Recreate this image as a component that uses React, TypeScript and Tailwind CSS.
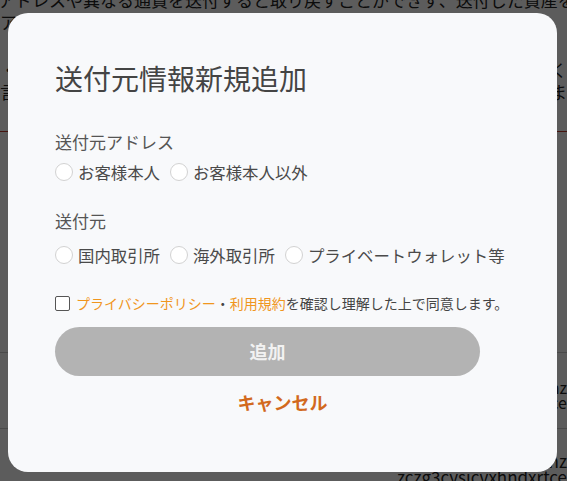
import React from "react";

const jp = { fontFamily: '"Noto Sans CJK JP", "Noto Sans", sans-serif' };

// Round radio with label text
const Radio = ({ label }: { label: string }) => (
  <label className="flex items-center gap-[5px]">
    <span className="w-[18px] h-[18px] rounded-full border border-[#d2d2d2] bg-white shrink-0" />
    <span className="text-[16.4px] leading-[24px] text-[#4a4a4a]">{label}</span>
  </label>
);

export default function App() {
  return (
    <div
      className="relative w-[567px] h-[481px] overflow-hidden bg-white text-[#222]"
      style={jp}
    >
      {/* Page underneath the dialog */}
      <div className="-mt-[11px]">
        <p className="text-[17px] leading-[22px] whitespace-nowrap -ml-[2px]">
          アドレスや異なる通貨を送付すると取り戻すことができず、送付した資産を失う可能性があります。
        </p>
        <p className="text-[17px] leading-[22px]">アドレスをご確認ください。</p>
        <div className="mt-[26px] flex justify-between text-[17px] leading-[22px]">
          <span>・</span>
          <span>く</span>
        </div>
        <div className="flex justify-between text-[17px] leading-[22px]">
          <span>言</span>
          <span>ま</span>
        </div>
        <div className="mt-[9px] h-[20px] border-b border-[#c0392b]" />
        <div className="h-[220px]" />
        <div className="border-t border-[#ccc] h-[76px] flex flex-col items-end justify-center text-[16px] leading-[15px] pt-[8px]">
          <span>hnz</span>
          <span>rce</span>
        </div>
        <div className="border-t border-[#ccc] flex flex-col items-end text-[17px] leading-[16px] pt-[24px]">
          <span>hnz</span>
          <span>zczg3cysicvxhndxrtce</span>
        </div>
      </div>

      {/* Backdrop */}
      <div className="absolute inset-0 bg-black/[0.64]" />

      {/* Dialog */}
      <div className="absolute left-[8px] top-[13px] w-[549px] h-[459px] rounded-[20px] bg-[#f8f9fb] px-[47px] pt-[45px]">
        <h2 className="text-[28px] leading-[40px] text-[#444] font-normal">
          送付元情報新規追加
        </h2>

        <div className="mt-[32px] text-[17px] leading-[24px] text-[#555]">
          送付元アドレス
        </div>
        <div className="mt-[6px] flex items-center gap-[10px]">
          <Radio label="お客様本人" />
          <Radio label="お客様本人以外" />
        </div>

        <div className="mt-[25px] text-[17px] leading-[24px] text-[#555]">
          送付元
        </div>
        <div className="mt-[10px] flex items-center gap-[10px]">
          <Radio label="国内取引所" />
          <Radio label="海外取引所" />
          <Radio label="プライベートウォレット等" />
        </div>

        <div className="mt-[25px] flex items-center gap-[6px]">
          <span className="w-[15px] h-[15px] border-[1.5px] border-[#555] rounded-[2px] bg-white shrink-0" />
          <span className="text-[14px] leading-[22px] text-[#444] whitespace-nowrap">
            <span className="text-[#f0961e]">プライバシーポリシー</span>・
            <span className="text-[#f0961e]">利用規約</span>
            を確認し理解した上で同意します。
          </span>
        </div>

        <button className="mt-[13px] w-[425px] h-[49px] rounded-full bg-[#b3b3b3] text-[#f2f2f2] text-[18px] font-bold">
          追加
        </button>

        <div className="mt-[13px] text-center text-[18px] leading-[26px] font-bold text-[#d2691e]">
          キャンセル
        </div>
      </div>
    </div>
  );
}
